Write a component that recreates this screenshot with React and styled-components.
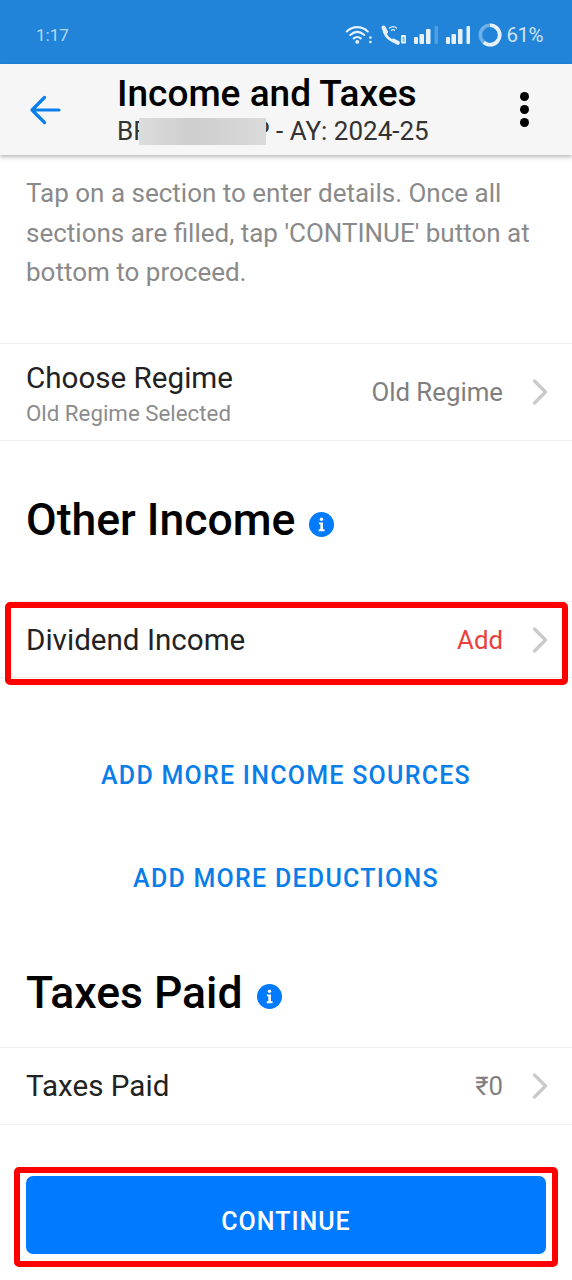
import styled, { createGlobalStyle } from "styled-components";

const GlobalStyle = createGlobalStyle`
  html, body {
    margin: 0;
    padding: 0;
    background: #fff;
    font-family: Roboto, "Liberation Sans", sans-serif;
  }
`;

const Screen = styled.div`
  width: 572px;
  height: 1280px;
  overflow: hidden;
  background: #fff;
`;

//* Status bar
const StatusBar = styled.div`
  height: 64px;
  padding: 5px 29px 0 36px;
  box-sizing: border-box;
  display: flex;
  align-items: center;
  justify-content: space-between;
  background: #2184d9;
  color: #b9d8f3;
  font-size: 17px;
`;

const StatusIcons = styled.div`
  display: flex;
  align-items: center;
  gap: 8px;
`;

const BatteryText = styled.span`
  margin-left: -4px;
  font-size: 20.5px;
  letter-spacing: -0.5px;
  color: #cfe3f6;
`;

//* Header
const Header = styled.header`
  height: 91px;
  box-sizing: border-box;
  display: flex;
  align-items: center;
  background: #f6f6f6;
  box-shadow: 0 2px 4px rgba(0, 0, 0, 0.28);
  position: relative;
`;

const BackButton = styled.div`
  width: 117px;
  padding-left: 29px;
  box-sizing: border-box;
  display: flex;
  align-items: center;
`;

const HeaderText = styled.div`
  flex: 1;
  display: flex;
  flex-direction: column;
  padding-top: 2px;
`;

const HeaderTitle = styled.div`
  font-size: 37px;
  line-height: 41px;
  font-weight: 500;
  color: #000;
`;

const HeaderSub = styled.div`
  font-size: 26px;
  line-height: 34px;
  color: #333;
  display: flex;
  align-items: center;
  white-space: pre;
`;

const Redacted = styled.span`
  width: 127px;
  height: 27px;
  margin: 0 -13px 0 -10px;
  background: linear-gradient(90deg, #dcdcdc, #cecece 40%, #dadada);
  position: relative;
`;

const MenuDots = styled.div`
  width: 96px;
  display: flex;
  flex-direction: column;
  align-items: center;
  gap: 4px;

  span {
    width: 9px;
    height: 9px;
    border-radius: 50%;
    background: #000;
  }
`;

//* Body
const Intro = styled.p`
  margin: 0 0 18px;
  padding: 19px 26px 0;
  font-size: 26px;
  line-height: 39.5px;
  color: #8a8a8a;
  height: 170px;
  box-sizing: border-box;
`;

const Row = styled.div`
  height: ${(p) => p.$height}px;
  box-sizing: border-box;
  padding: 0 24px 0 26px;
  display: flex;
  align-items: center;
  justify-content: space-between;
  border-top: 1px solid #efefef;
  border-bottom: 1px solid #efefef;
`;

const RowLabel = styled.div`
  display: flex;
  flex-direction: column;
`;

const RowTitle = styled.div`
  font-size: 29.6px;
  line-height: 36px;
  color: #222;
`;

const RowHint = styled.div`
  font-size: 22.3px;
  line-height: 32px;
  margin-top: 1px;
  margin-bottom: -4px;
  color: #8c8c8c;
`;

const RowValue = styled.div`
  display: flex;
  align-items: center;
  gap: 29px;
  font-size: 25.8px;
  color: ${(p) => p.$color || "#7f7f7f"};
`;

const SectionTitle = styled.h2`
  margin: ${(p) => p.$top || 0}px 0 0;
  padding: 0 26px ${(p) => p.$bottom || 0}px;
  box-sizing: border-box;
  display: flex;
  align-items: center;
  gap: 14px;
  font-size: 44.5px;
  font-weight: 500;
  line-height: 1;
  color: #000;
  height: ${(p) => p.$height}px;

  svg {
    margin-top: ${(p) => p.$iconDrop}px;
  }
`;

const Highlighted = styled.div`
  position: relative;
`;

const RedBox = styled.div`
  position: absolute;
  left: ${(p) => p.$left}px;
  right: ${(p) => p.$right}px;
  top: ${(p) => p.$top}px;
  bottom: ${(p) => p.$bottom}px;
  border: 6px solid #fe0000;
  border-radius: 5px;
  pointer-events: none;
`;

const LinkButton = styled.div`
  text-align: center;
  font-size: 25px;
  font-weight: 500;
  letter-spacing: 1.25px;
  line-height: 32px;
  color: #0a7ee8;
  margin-top: ${(p) => p.$top}px;
`;

const ContinueWrap = styled(Highlighted)`
  margin: 51px 26px 0;
`;

const ContinueButton = styled.div`
  height: 78px;
  box-sizing: border-box;
  padding-top: 12px;
  display: flex;
  align-items: center;
  justify-content: center;
  border-radius: 7px;
  background: #007aff;
  color: #fff;
  font-size: 25px;
  font-weight: 500;
  letter-spacing: 1px;
`;

const Wifi = () => (
  <svg width="28" height="21" viewBox="0 0 32 24" fill="none" stroke="#e6f1fb" strokeLinecap="round">
    <path d="M2 8.500C9 2 19 2 26 8.500" strokeWidth="2.400" />
    <path d="M6 12.500c5-4.400 11-4.400 16 0" strokeWidth="2.400" />
    <path d="M10 16.500c3-2.400 5-2.400 8 0" strokeWidth="2.400" />
    <circle cx="14" cy="20.500" r="2.200" fill="#e6f1fb" stroke="none" />
    <circle cx="29" cy="15.500" r="1.500" fill="#e6f1fb" stroke="none" />
    <circle cx="29" cy="20.500" r="1.500" fill="#e6f1fb" stroke="none" />
  </svg>
);

const Call = () => (
  <svg width="25" height="20" viewBox="0 0 25 20" fill="none" stroke="#e6f1fb" strokeLinecap="round">
    <path d="M2.800 4.500C3.500 10.500 9 16 15 16.500" strokeWidth="2.600" />
    <path d="M2.500 2.500 5 7M12.500 15.500 16.800 17.800" strokeWidth="4" />
    <path d="M8.500 3c2-1.700 5-1.700 7 0M10.500 5.300c1-.8 2-.8 3 0" strokeWidth="1.200" />
    <rect x="20" y="10" width="5" height="8.500" rx="1" fill="#e6f1fb" stroke="none" />
    <rect x="21.500" y="12" width="2" height="4.500" fill="#7fb8e8" stroke="none" />
  </svg>
);

const Signal = ({ dim }) => (
  <svg width="24" height="18" viewBox="0 0 24 18">
    <rect x="0" y="11" width="4" height="7" rx="1" fill="#e6f1fb" />
    <rect x="5.500" y="8" width="4.500" height="10" rx="1" fill="#e6f1fb" />
    <rect x="12" y="3" width="4.500" height="15" rx="1" fill="#e6f1fb" />
    <rect x="20.500" y="0" width="3.500" height="18" rx="1" fill={dim ? "#4f9fe2" : "#e6f1fb"} />
  </svg>
);

const Battery = () => (
  <svg width="24" height="24" viewBox="0 0 24 24" fill="none" strokeWidth="3.600">
    <circle cx="12" cy="12" r="9.700" stroke="#6dafe6" />
    <circle cx="12" cy="12" r="9.700" stroke="#e6f1fb" strokeDasharray="37 61" transform="rotate(-90 12 12)" />
  </svg>
);

const BackArrow = () => (
  <svg width="32" height="32" viewBox="0 0 32 32" fill="none" stroke="#0a7ee8" strokeWidth="3.200" strokeLinecap="round" strokeLinejoin="round">
    <path d="M30 16H3M15.500 3.500 3 16 15.500 28.500" />
  </svg>
);

const Chevron = () => (
  <svg width="16" height="26" viewBox="0 0 16 26" fill="none" stroke="#c9c9c9" strokeWidth="3.200" strokeLinecap="round" strokeLinejoin="round">
    <path d="M2.500 2 13.500 13 2.500 24" />
  </svg>
);

const InfoIcon = () => (
  <svg width="25" height="25" viewBox="0 0 26 26">
    <circle cx="13" cy="13" r="13" fill="#007aff" />
    <circle cx="13" cy="7.500" r="1.800" fill="#fff" />
    <path d="M10.300 10.800h4.200v7.200h1.700v2h-6.100v-2h1.700v-5.200h-1.500z" fill="#fff" />
  </svg>
);

export default function App() {
  return (
    <Screen>
      <GlobalStyle />
      <StatusBar>
        <span>1:17</span>
        <StatusIcons>
          <Wifi />
          <Call />
          <Signal dim />
          <Signal />
          <Battery />
          <BatteryText>61%</BatteryText>
        </StatusIcons>
      </StatusBar>
      <Header>
        <BackButton>
          <BackArrow />
        </BackButton>
        <HeaderText>
          <HeaderTitle>Income and Taxes</HeaderTitle>
          <HeaderSub>
            BR<Redacted />P - AY: 2024-25
          </HeaderSub>
        </HeaderText>
        <MenuDots>
          <span />
          <span />
          <span />
        </MenuDots>
      </Header>
      <Intro>
        Tap on a section to enter details. Once all sections are filled, tap 'CONTINUE' button at
        bottom to proceed.
      </Intro>
      <Row $height={98}>
        <RowLabel>
          <RowTitle>Choose Regime</RowTitle>
          <RowHint>Old Regime Selected</RowHint>
        </RowLabel>
        <RowValue>
          Old Regime
          <Chevron />
        </RowValue>
      </Row>
      <SectionTitle $height={160} $bottom={2} $iconDrop={8}>
        Other Income
        <InfoIcon />
      </SectionTitle>
      <Highlighted>
        <Row $height={77}>
          <RowTitle>Dividend Income</RowTitle>
          <RowValue $color="#e8403a">
            Add
            <Chevron />
          </RowValue>
        </Row>
        <RedBox $left={5} $right={4} $top={1} $bottom={-7} />
      </Highlighted>
      <LinkButton $top={82}>ADD MORE INCOME SOURCES</LinkButton>
      <LinkButton $top={71}>ADD MORE DEDUCTIONS</LinkButton>
      <SectionTitle $top={44} $height={108} $iconDrop={6}>
        Taxes Paid
        <InfoIcon />
      </SectionTitle>
      <Row $height={78}>
        <RowTitle>Taxes Paid</RowTitle>
        <RowValue>
          ₹0
          <Chevron />
        </RowValue>
      </Row>
      <ContinueWrap>
        <ContinueButton>CONTINUE</ContinueButton>
        <RedBox $left={-12} $right={-12} $top={-9} $bottom={-13} />
      </ContinueWrap>
    </Screen>
  );
}
